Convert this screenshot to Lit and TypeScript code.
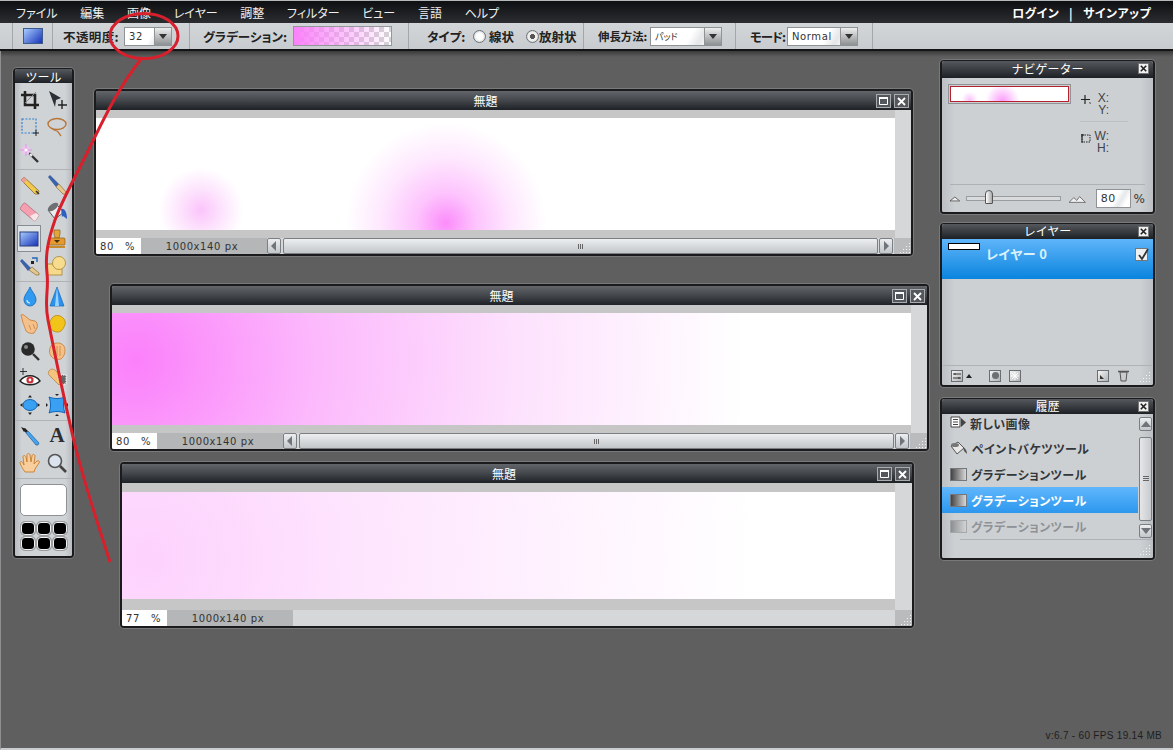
import { LitElement, html, css, svg } from "lit";
import { customElement } from "lit/decorators.js";

const MENU = ["ファイル", "編集", "画像", "レイヤー", "調整", "フィルター", "ビュー", "言語", "ヘルプ"];

const ico = (body: unknown) =>
  html`<svg class="ico" viewBox="0 0 22 22" width="22" height="22">${body}</svg>`;

// tool icons, row by row, two per row. null leaves the slot empty
const TOOLS_A = [
  [
    svg`<path d="M6 2v14h14M2 6h14v14" fill="none" stroke="#222" stroke-width="2.6"/><path d="M17 3l-11 11" stroke="#888" stroke-width="1"/>`,
    svg`<path d="M3 2l12 7-5 2-1 7z" fill="#2c3036"/><path d="M16 11v9M12 16h9" stroke="#222" stroke-width="1.4"/>`,
  ],
  [
    svg`<rect x="3" y="3" width="14" height="14" fill="none" stroke="#2f7fd0" stroke-width="1.2" stroke-dasharray="2 1.4"/><path d="M17 14v6M14 17h6" stroke="#222"/>`,
    svg`<ellipse cx="11" cy="8" rx="9" ry="5.5" fill="none" stroke="#b7763a" stroke-width="1.4"/><path d="M6 12c1 3 5 2 6 4l3 4" fill="none" stroke="#b7763a" stroke-width="1.3"/>`,
  ],
  [
    svg`<path d="M9 9l10 10" stroke="#333" stroke-width="2.4"/><path d="M11 11l2 2" stroke="#eee" stroke-width="2.2"/><circle cx="7" cy="7" r="4.5" fill="#ecc6ee"/><path d="M7 1v12M1 7h12" stroke="#d79be0" stroke-width="1"/><circle cx="7" cy="7" r="1.6" fill="#fff"/>`,
    null,
  ],
];

const TOOLS_B = [
  [
    svg`<path d="M5 3l15 14-1 3-3 0L2 6z" fill="#f0c94e" stroke="#8a6a2a" stroke-width=".8"/><path d="M2 6l3-3 3 3-3 3z" fill="#ee9d9d"/><path d="M17 17l3 3" stroke="#333" stroke-width="1.6"/>`,
    svg`<path d="M2 3l2-2 9 9-3 3z" fill="#3b62a8"/><path d="M10 13l3-3 7 8v2h-3z" fill="#e3c78c" stroke="#8b6f3b" stroke-width=".7"/>`,
  ],
  [
    svg`<path d="M6 2l14 12-3 5c-1 1-2 1-3 0L2 9c-1-1-1-2 0-3l2-3c1-1 1-1 2-1z" fill="#f59fb0" stroke="#a56a72" stroke-width=".7"/><path d="M11 15l3 4c1 1 2 1 3 0l3-5-3-2z" fill="#f7e6e8"/>`,
    svg`<path d="M2 9l8-6 8 8-9 7z" fill="#eceded" stroke="#555" stroke-width="1"/><ellipse cx="7" cy="6" rx="6" ry="3" fill="#6d6f72" transform="rotate(-35 7 6)"/><path d="M15 8c4-1 6 4 6 10l-4-3-1 1z" fill="#2f62c0"/>`,
  ],
];

const GRAD_TOOL = svg`<defs><linearGradient id="gt" x1="0" y1="0" x2="1" y2="1"><stop offset="0" stop-color="#a8ccff"/><stop offset="1" stop-color="#1733b8"/></linearGradient></defs><rect x="2" y="4" width="18" height="14" fill="url(#gt)" stroke="#2a3f78" stroke-width="1"/>`;

const STAMP = svg`<path d="M8 2h6v4l-1 4h-4l-1-4z" fill="#e2a53c" stroke="#8a5e1a" stroke-width=".7"/><rect x="3" y="10" width="16" height="7" rx="1" fill="#e39a2e" stroke="#8a5e1a" stroke-width=".7"/><path d="M8 12h6l-3 3z" fill="#4a2d0a"/><rect x="3" y="18" width="16" height="2" fill="#c98a2a"/>`;

const TOOLS_C = [
  [
    svg`<path d="M1 6l2-2 9 9-3 3z" fill="#3b62a8"/><path d="M10 15l3-3 7 6v2h-3z" fill="#e3c78c" stroke="#8b6f3b" stroke-width=".7"/><path d="M13 3h5v4" fill="none" stroke="#2466b8" stroke-width="1.4"/><rect x="12" y="6" width="3" height="3" fill="#222"/>`,
    svg`<rect x="1" y="9" width="15" height="11" fill="#f6d98a" stroke="#a78433" stroke-width=".8"/><circle cx="13" cy="8" r="6.5" fill="#f8dc8e" stroke="#a78433" stroke-width=".8"/>`,
  ],
];

const TOOLS_D = [
  [
    svg`<path d="M11 1c2 5 6 8 6 13a6 6 0 0 1-12 0c0-5 4-8 6-13z" fill="#2f9af0" stroke="#1466b8" stroke-width=".8"/><path d="M8 14a3 3 0 0 0 3 3" stroke="#cfe9ff" fill="none" stroke-width="1.2"/>`,
    svg`<path d="M11 1l7 19H4z" fill="#2a93ee" stroke="#1466b8" stroke-width=".7"/><path d="M11 1l-2 19h4z" fill="#9ad2ff"/>`,
  ],
  [
    svg`<path d="M2 2c1-1 3 0 4 1l5 4 5 1c2 1 3 4 2 7l-3 5c-3 1-6 0-8-2-1-3-2-6-3-8z" fill="#f6c08a" stroke="#c07c3a" stroke-width=".8"/><path d="M10 12l2 5M14 11l2 5" stroke="#c07c3a" stroke-width=".7"/>`,
    svg`<path d="M6 5c3-4 9-3 12 1 3 4 0 9-3 12-3 2-8 1-11-3-2-3 0-7 2-10z" fill="#f2c419" stroke="#b9860f" stroke-width=".8"/>`,
  ],
  [
    svg`<circle cx="9" cy="9" r="6.8" fill="#2a2a2a"/><circle cx="7" cy="7" r="2" fill="#8a8a8a"/><path d="M14 14l6 6" stroke="#333" stroke-width="2.4"/>`,
    svg`<path d="M5 6c3-4 10-4 13 0 2 4 1 10-3 13-4 1-8 0-10-3-2-3-2-7 0-10z" fill="#f5bf85" stroke="#c07c3a" stroke-width=".8"/><path d="M11 6v10M14 6v10M8 7v8" stroke="#c07c3a" stroke-width=".7"/>`,
  ],
  [
    svg`<path d="M1 14c5-7 15-7 20 0-5 5-15 5-20 0z" fill="#fff" stroke="#222" stroke-width="1.4"/><circle cx="11" cy="13" r="3.6" fill="#c8303a"/><circle cx="11" cy="13" r="1.4" fill="#fff"/><path d="M4 1v7M1 4.500h7" stroke="#222" stroke-width=".9"/>`,
    svg`<path d="M3 4c2-3 5-2 7 0l7 8-4 6-9-9c-2-2-2-3-1-5z" fill="#f6c37e" stroke="#b07a33" stroke-width=".7"/><path d="M12 8h8v9h-6z" fill="#666" stroke="#fff" stroke-dasharray="1.500 1"/>`,
  ],
  [
    svg`<ellipse cx="11" cy="11" rx="7" ry="5.500" fill="#39a0f2" stroke="#1466b8"/><path d="M11 1l2 2.500h-4zM11 21l2-2.500h-4zM1 11l2.500-2v4zM21 11l-2.500-2v4z" fill="#222"/>`,
    svg`<path d="M3 3c5 2 11 2 16 0-2 5-2 11 0 16-5-2-11-2-16 0 2-5 2-11 0-16z" fill="#39a0f2" stroke="#1466b8"/><path d="M0 9v4l2-2zM22 9v4l-2-2zM9 0h4l-2 2zM9 22h4l-2-2z" fill="#222"/>`,
  ],
];

const TOOLS_E: unknown[][] = [
  [
    svg`<path d="M2 2l5 2-2 3z" fill="#222"/><path d="M5 4l3 3" stroke="#222" stroke-width="2.6"/><path d="M7 8l2-2 11 12-1 2-2 0z" fill="#46a3ee" stroke="#1b5f9c" stroke-width=".7"/>`,
    "A",
  ],
  [
    svg`<path d="M6 20c-2-3-4-6-5-9 0-2 2-2 3 0l1 2-1-8c0-2 2-2 3 0l1 5V3c0-2 3-2 3 0l1 7 1-6c0-2 3-2 3 0l-1 8 3-3c2-1 3 1 2 2l-4 6-1 3z" fill="#f8cf9c" stroke="#c77d2e" stroke-width=".9"/>`,
    svg`<circle cx="9" cy="9" r="6.500" fill="#dbe4ee" stroke="#555" stroke-width="1.600"/><path d="M14 14l6 6" stroke="#444" stroke-width="2.600"/>`,
  ],
];

const renderTool = (t: unknown, active = false) => {
  if (t === null) return html`<span class="tool"></span>`;
  if (t === "A") return html`<span class="tool letter">A</span>`;
  return html`<span class="tool ${active ? "active" : ""}">${ico(t)}</span>`;
};

const renderGroup = (rows: unknown[][]) => rows.map((r) => r.map((t) => renderTool(t)));

const SWATCH_COUNT = 6;

const CLOSE_SMALL = html`<span class="pclose"><svg viewBox="0 0 10 10" width="9" height="9"><path d="M2 2l6 6M8 2l-6 6" stroke="#222" stroke-width="1.800"/></svg></span>`;

const GRIP = html`<svg class="grip" viewBox="0 0 12 12" width="12" height="12"><path d="M10 1h1v1h-1zM10 4h1v1h-1zM7 4h1v1H7zM10 7h1v1h-1zM7 7h1v1H7zM4 7h1v1H4zM10 10h1v1h-1zM7 10h1v1H7zM4 10h1v1H4zM1 10h1v1H1z" fill="#f2f2f2"/></svg>`;

const ARROW_L = html`<svg viewBox="0 0 6 10" width="6" height="10"><path d="M5 0v10L0 5z" fill="#6f757b"/></svg>`;
const ARROW_R = html`<svg viewBox="0 0 6 10" width="6" height="10"><path d="M1 0v10l5-5z" fill="#6f757b"/></svg>`;

@customElement("app-root")
export class AppRoot extends LitElement {
  static styles = css`
    :host {
      display: flex;
      flex-direction: column;
      position: relative;
      width: 1173px;
      height: 750px;
      overflow: hidden;
      background: #5f5f5f;
      font-family: "Noto Sans CJK JP", "Liberation Sans", sans-serif;
      color: #222;
    }
    .menubar {
      flex: none;
      height: 23px;
      box-sizing: border-box;
      border-top: 1px solid #b5b8bb;
      background: linear-gradient(#0e0f11, #2b2d31);
      display: flex;
      align-items: center;
      padding: 0 22px 0 16px;
      color: #f0f0f0;
      font-size: 12px;
      font-feature-settings: "palt";
    }
    .menubar .m {
      margin-right: 22.700px;
      white-space: nowrap;
    }
    .login {
      margin-left: auto;
      font-weight: 700;
      color: #fff;
      display: flex;
      gap: 10px;
      letter-spacing: 0.4px;
    }
    .optbar {
      flex: none;
      height: 26px;
      background: linear-gradient(#d2d6d8, #c8ccd0);
      display: flex;
      align-items: center;
      padding-left: 12px;
      font-size: 12.500px;
      font-weight: 700;
      font-feature-settings: "palt";
      border-bottom: 2px solid #141414;
    }
    .seg {
      height: 26px;
      box-sizing: border-box;
      border-left: 1px solid #a3a7aa;
      display: flex;
      align-items: center;
      white-space: nowrap;
    }
    .s-swatch {
      width: 40px;
      padding-left: 10px;
    }
    .s-opacity {
      width: 137px;
      padding-left: 10px;
    }
    .s-opacity .lab {
      width: 61px;
      letter-spacing: 0.4px;
    }
    .s-opacity .select {
      width: 48px;
    }
    .s-grad {
      width: 219px;
      padding-left: 13px;
    }
    .s-grad .lab {
      width: 90px;
    }
    .s-type {
      width: 175px;
      padding-left: 18px;
    }
    .s-type .lab {
      width: 46px;
    }
    .s-type .first {
      margin-right: 12px;
    }
    .s-stretch {
      width: 152px;
      padding-left: 14px;
    }
    .s-stretch .lab {
      width: 52px;
      font-size: 11.400px;
    }
    .s-stretch .select {
      width: 72px;
    }
    .s-mode {
      width: 137px;
      padding-left: 14px;
    }
    .s-mode .lab {
      width: 37px;
      letter-spacing: -1px;
    }
    .s-mode .select {
      width: 71px;
    }
    .s-mode .val {
      color: #666;
    }
    .s-end {
      width: 0;
    }
    .swatch-ico {
      width: 18px;
      height: 14px;
      background: linear-gradient(135deg, #a8ccff, #1733b8);
      border: 1px solid #3c5a8a;
    }
    .select {
      display: flex;
      height: 19px;
      box-sizing: border-box;
      border: 1px solid #8f9396;
      background: linear-gradient(120deg, #fff 55%, #e4e6e8 70%, #fff 85%);
      font-family: "DejaVu Sans", sans-serif;
      font-weight: 400;
      font-size: 10px;
      align-items: center;
      letter-spacing: 0.6px;
    }
    .select .val {
      flex: 1;
      padding-left: 4px;
      color: #333;
    }
    .select .val.ja {
      font-family: "Noto Sans CJK JP", sans-serif;
      font-size: 9px;
      letter-spacing: 0;
    }
    .select .btn {
      width: 16px;
      height: 17px;
      background: linear-gradient(#eceded, #8e9193);
      display: flex;
      align-items: center;
      justify-content: center;
      border-left: 1px solid #8f9396;
    }
    .select .btn::after {
      content: "";
      border: 4px solid transparent;
      border-top: 5px solid #333;
      border-bottom: 0;
    }
    .gradbox {
      width: 99px;
      height: 20px;
      box-sizing: border-box;
      border: 1px solid #93979a;
      background: linear-gradient(90deg, #fa82fa, rgba(250, 130, 250, 0)),
        repeating-conic-gradient(#d4d4d4 0 25%, #fff 0 50%) 0 0 / 10px 10px;
    }
    .radio {
      width: 11px;
      height: 11px;
      border-radius: 50%;
      border: 1px solid #70757a;
      background: radial-gradient(circle, #fff 40%, #b9bdc0);
      margin-right: 3px;
    }
    .radio.on {
      background: radial-gradient(circle, #555 0 30%, #eee 35% 55%, #a9adb0);
      margin-right: 0;
    }
    .desk {
      flex: 1;
      background: linear-gradient(#3a3a3a, #5f5f5f 6px);
      border-left: 1px solid #8d8f91;
      border-bottom: 2px solid #c9cdd0;
    }

    /* windows sit on a free desktop, so these are placed by coordinates */
    .win,
    .panel {
      position: absolute;
      box-sizing: border-box;
      border: 2px solid #1b1b1d;
      border-radius: 4px;
      box-shadow: 0 0 0 1px #77797b;
      display: flex;
      flex-direction: column;
      background: #cdd0d3;
      overflow: hidden;
    }
    .panel {
      border-top-width: 1px;
    }
    .w1 {
      left: 94px;
      top: 89px;
      width: 819px;
      height: 167px;
    }
    .w2 {
      left: 110px;
      top: 284px;
      width: 819px;
      height: 167px;
    }
    .w3 {
      left: 120px;
      top: 462px;
      width: 794px;
      height: 166px;
    }
    .title {
      flex: none;
      height: 19px;
      background: linear-gradient(#62666b, #43474c 50%, #1e2126);
      color: #fff;
      font-size: 12px;
      display: flex;
      align-items: center;
      justify-content: center;
      padding-right: 36px;
      position: relative;
    }
    .w3 .title {
      padding-right: 26px;
    }
    .tbtns {
      position: absolute;
      right: 2px;
      top: 3px;
      display: flex;
      gap: 3px;
    }
    .tbtn {
      width: 13px;
      height: 12px;
      border: 1px solid #a9acaf;
      background: #54585d;
      display: flex;
      align-items: center;
      justify-content: center;
    }
    .main {
      flex: 1;
      display: flex;
      min-height: 0;
    }
    .stage {
      flex: 1;
      min-width: 0;
      display: flex;
      flex-direction: column;
      background: #c6c6c6;
      padding: 8px 0;
    }
    .w3 .stage {
      padding: 9px 0 11px;
    }
    .w3 .vcol {
      width: 17px;
    }
    .w3 .art {
      background: radial-gradient(circle 640px at 3.200% 62%, #fdd2fd, #fee6fe 35%, #fff 95%);
    }
    .w2 .art {
      background: radial-gradient(circle 640px at 3% 42%, #fb80fb, #fcb9fc 28%, #fde2fd 60%, #fff 95%);
    }
    .w1 .art {
      background: radial-gradient(circle 42px at 105px 92px, #fbc4fb, #fde4fd 50%, rgba(255, 255, 255, 0)),
        radial-gradient(circle 100px at 350px 105px, #fb8cfb, #fdc4fd 30%, #fee8fe 65%, rgba(255, 255, 255, 0)), #fff;
    }
    .art {
      flex: 1;
    }
    .vcol {
      flex: none;
      width: 16px;
      background: #d6d7d9;
    }
    .status {
      flex: none;
      height: 16px;
      display: flex;
      background: #d6d7d9;
      font-family: "DejaVu Sans", sans-serif;
      font-size: 10px;
      letter-spacing: 0.6px;
      align-items: stretch;
      color: #333;
    }
    .zoomf {
      width: 45px;
      box-sizing: border-box;
      background: #fff;
      display: flex;
      justify-content: space-between;
      align-items: center;
      padding: 0 6px 0 4px;
    }
    .info {
      width: 126px;
      box-sizing: border-box;
      padding-right: 4px;
      background: #b4b6b7;
      display: flex;
      justify-content: center;
      align-items: center;
    }
    .sbtn {
      width: 14px;
      box-sizing: border-box;
      border: 1px solid #7a7f84;
      border-radius: 2px;
      background: linear-gradient(#eceef0, #c3c7ca);
      display: flex;
      align-items: center;
      justify-content: center;
    }
    .strack {
      flex: 1;
      margin: 0 1px 0 2px;
      box-sizing: border-box;
      border: 1px solid #7a7f84;
      border-radius: 2px;
      background: linear-gradient(#eceef0, #c3c7ca);
      display: flex;
      align-items: center;
      justify-content: center;
    }
    .strack span {
      width: 6px;
      height: 5px;
      background: repeating-linear-gradient(90deg, #666 0 1px, transparent 1px 2px);
    }
    .gripbox {
      flex: none;
      width: 17px;
      margin-left: 1px;
      background: #b9bbbd;
      display: flex;
      align-items: flex-end;
      justify-content: flex-end;
    }
    .status .fill {
      flex: 1;
    }

    /* tools palette */
    .tools {
      left: 13px;
      top: 68px;
      width: 61px;
      height: 490px;
    }
    .phead {
      flex: none;
      height: 15px;
      padding-bottom: 2px;
      box-sizing: content-box;
      background: linear-gradient(#55595e, #1d2025);
      color: #fff;
      font-size: 12px;
      display: flex;
      align-items: center;
      justify-content: center;
      position: relative;
    }
    .tools .phead {
      height: 14px;
      padding-bottom: 0;
    }
    .nav .phead {
      height: 14px;
      padding-bottom: 3px;
    }
    .layers .phead,
    .hist .phead {
      height: 13px;
      padding-bottom: 2px;
    }
    .tbody {
      flex: 1;
      background: linear-gradient(90deg, #b8bbbf, #d0d3d6 12%, #d0d3d6 88%, #b8bbbf);
      padding-top: 3px;
      display: flex;
      flex-direction: column;
    }
    .tgrid {
      display: grid;
      grid-template-columns: 27px 27px;
      grid-auto-rows: 27px;
      justify-content: center;
      padding-bottom: 2px;
      border-bottom: 1px solid #b0b3b6;
      margin-bottom: 1px;
    }
    .tool {
      display: flex;
      align-items: center;
      justify-content: center;
      box-sizing: border-box;
      height: 27px;
    }
    .tool.active {
      border: 1px solid #888d93;
      background: #dfe3e6;
      margin-right: 3px;
    }
    .tool.letter {
      font-family: "Liberation Serif", serif;
      font-weight: 700;
      font-size: 21px;
      color: #2b2e33;
    }
    .ico {
      display: block;
    }
    .fg {
      margin: 4px 5px 6px;
      height: 32px;
      background: #fff;
      border: 1px solid #8e9295;
      border-radius: 5px;
      box-sizing: border-box;
    }
    .blacks {
      display: grid;
      grid-template-columns: repeat(3, 14px);
      grid-auto-rows: 13px;
      gap: 2px;
      justify-content: center;
    }
    .blacks i {
      background: #000;
      border: 1px solid #f2f2f2;
      border-radius: 4px;
      box-shadow: 0 0 0 1px #9a9da0;
    }

    /* right side panels */
    .nav {
      left: 940px;
      top: 60px;
      width: 215px;
      height: 154px;
    }
    .layers {
      left: 940px;
      top: 223px;
      width: 215px;
      height: 164px;
    }
    .hist {
      left: 940px;
      top: 398px;
      width: 215px;
      height: 162px;
    }
    .pclose {
      position: absolute;
      right: 4px;
      top: 2px;
      width: 9px;
      height: 9px;
      background: #f0f0f0;
      border: 1px solid #777;
      display: flex;
    }
    .pbody {
      flex: 1;
      display: flex;
      flex-direction: column;
      min-height: 0;
      background: linear-gradient(90deg, #bcbfc3, #cdd0d3 6%, #cdd0d3 94%, #bcbfc3);
    }
    .navtop {
      flex: 1;
      display: flex;
      padding: 6px 0 0 6px;
    }
    .thumb {
      width: 123px;
      height: 20px;
      box-sizing: border-box;
      border: 1px solid #8f9396;
      padding: 1px;
    }
    .thumb div {
      height: 100%;
      box-sizing: border-box;
      border: 1px solid #b3222e;
      background: radial-gradient(circle 8px at 16% 90%, #fbc4fb, rgba(255, 255, 255, 0)),
        radial-gradient(circle 17px at 44% 100%, #fb9cfb, rgba(255, 255, 255, 0)), #fff;
    }
    .coords {
      margin: 6px 0 0 9px;
      width: 48px;
      color: #3e4347;
      font-family: "Liberation Sans", sans-serif;
      font-size: 12px;
      line-height: 12px;
    }
    .coord {
      display: flex;
      align-items: center;
      height: 28px;
    }
    .coord svg {
      flex: none;
      margin-top: -8px;
    }
    .coord + .coord {
      border-top: 1px solid #bcc0c3;
      margin-top: 3px;
      padding-top: 6px;
    }
    .coord b {
      font-weight: 400;
      text-align: right;
      width: 17px;
    }
    .navbot {
      flex: none;
      height: 27px;
      margin: 0 8px;
      border-top: 1px solid #aeb2b5;
      display: flex;
      align-items: center;
      font-size: 12px;
      font-family: "DejaVu Sans", sans-serif;
      color: #333;
    }
    .track {
      width: 97px;
      height: 3px;
      margin: 0 8px 0 5px;
      border: 1px solid #9a9da0;
      background: #d8dadc;
      position: relative;
    }
    .thumbknob {
      position: absolute;
      left: 18px;
      top: -7px;
      width: 8px;
      height: 14px;
      background: linear-gradient(90deg, #fff, #aaa);
      border: 1px solid #555;
      border-radius: 4px 4px 1px 1px;
      box-sizing: border-box;
    }
    .zinput {
      width: 36px;
      height: 19px;
      box-sizing: border-box;
      border: 1px solid #8f9396;
      background: linear-gradient(120deg, #fff 55%, #e6e8ea 70%, #fff 85%);
      font-size: 11px;
      letter-spacing: 0.6px;
      display: flex;
      align-items: center;
      padding-left: 4px;
      margin: 0 3px 0 9px;
    }
    .layer-row {
      flex: none;
      height: 40px;
      box-sizing: border-box;
      background: linear-gradient(#5fb5fa, #0a84de);
      display: flex;
      padding: 4px 5px 0 6px;
      color: #d9f1ff;
      font-size: 13px;
      font-weight: 700;
      font-feature-settings: "palt";
    }
    .lthumb {
      width: 32px;
      height: 7px;
      box-sizing: border-box;
      border: 1px solid #000;
      background: #fff;
    }
    .lname {
      margin: 1px 0 0 6px;
      letter-spacing: 0.4px;
      flex: 1;
    }
    .lcheck {
      margin-top: 5px;
      width: 11px;
      height: 11px;
      background: #eef0f1;
      border: 1px solid #777;
      position: relative;
    }
    .lcheck svg {
      display: block;
    }
    .spacer {
      flex: 1;
    }
    .pfoot {
      flex: none;
      height: 19px;
      margin: 0 1px;
      border-top: 1px solid #aeb2b5;
      display: flex;
      align-items: center;
      padding-left: 8px;
      position: relative;
    }
    .pfoot .grip {
      position: absolute;
      right: 1px;
      bottom: 2px;
    }
    .pfoot .caret {
      margin: 0 17px 0 3px;
    }
    .pfoot .trash {
      margin: 0 22px 0 8px;
    }
    .pfoot .gap {
      margin-left: 8px;
    }
    .pi {
      width: 10px;
      height: 10px;
      border: 1px solid #6a6e72;
      background: linear-gradient(135deg, #f6f6f6, #b0b3b6);
      display: flex;
      align-items: center;
      justify-content: center;
    }
    .pi.rec::after {
      content: "";
      width: 7px;
      height: 7px;
      border-radius: 50%;
      background: #6c7074;
    }
    .pi svg {
      display: block;
    }
    .histmain {
      flex: 1;
      display: flex;
      min-height: 0;
    }
    .hlist {
      flex: 1;
      overflow: hidden;
      font-size: 12px;
      font-weight: 700;
      letter-spacing: 0.4px;
      font-feature-settings: "palt";
      color: #33373b;
    }
    .hrow {
      height: 26px;
      display: flex;
      align-items: center;
      gap: 4px;
      padding-left: 8px;
      box-sizing: border-box;
    }
    .hrow svg {
      flex: none;
    }
    .hrow.first {
      height: 21px;
      padding-bottom: 3px;
    }
    .hrow.sel {
      background: linear-gradient(#60b7fc, #2c97ee);
      color: #fff;
    }
    .hrow.off {
      color: #8e9296;
    }
    .hrow.off .gi {
      opacity: 0.45;
    }
    .gi {
      width: 15px;
      height: 11px;
      border: 1px solid #74787c;
      background: linear-gradient(90deg, #444, #d8d8d8);
      flex: none;
    }
    .hscroll {
      flex: none;
      width: 15px;
      padding: 3px 1px 1px;
      box-sizing: border-box;
      display: flex;
      flex-direction: column;
    }
    .hscroll .u {
      flex: none;
      height: 14px;
      box-sizing: border-box;
      border: 1px solid #7a7f84;
      border-radius: 2px;
      background: linear-gradient(#eceef0, #c3c7ca);
      display: flex;
      align-items: center;
      justify-content: center;
    }
    .hscroll .t {
      flex: 1;
      border: 1px solid #7a7f84;
      border-radius: 2px;
      background: linear-gradient(90deg, #e4e6e8, #c8cbce);
      display: flex;
      align-items: center;
      justify-content: center;
      margin: 6px 0 3px;
    }
    .hscroll .t span {
      width: 6px;
      height: 6px;
      background: repeating-linear-gradient(#666 0 1px, transparent 1px 2px);
    }
    .hfoot {
      flex: none;
      height: 18px;
      border-top: 1px solid #aeb2b5;
      margin-left: 18px;
      position: relative;
    }
    .hfoot .grip {
      position: absolute;
      right: 2px;
      bottom: 2px;
    }
    .ver {
      position: absolute;
      right: 11px;
      bottom: 9px;
      font-family: "Liberation Sans", sans-serif;
      font-size: 10px;
      letter-spacing: 0.3px;
      color: #1e1e1e;
    }
    .mark {
      position: absolute;
      left: 0;
      top: 0;
      pointer-events: none;
    }
  `;

  private docWin(cls: string, zoom: string, scroll: boolean) {
    return html`
      <section class="win ${cls}">
        <div class="title">
          無題
          <div class="tbtns">
            <span class="tbtn"><svg viewBox="0 0 9 8" width="9" height="8"><path d="M.5 1.500h8v6h-8z" fill="none" stroke="#fff"/><path d="M0 1h9" stroke="#fff" stroke-width="2"/></svg></span>
            <span class="tbtn"><svg viewBox="0 0 9 9" width="9" height="9"><path d="M1 1l7 7M8 1L1 8" stroke="#fff" stroke-width="1.800"/></svg></span>
          </div>
        </div>
        <div class="main">
          <div class="stage"><div class="art"></div></div>
          <div class="vcol"></div>
        </div>
        <div class="status">
          <div class="zoomf"><span>${zoom}</span><span>%</span></div>
          <div class="info">1000x140 px</div>
          ${scroll
            ? html`<div class="sbtn">${ARROW_L}</div>
                <div class="strack"><span></span></div>
                <div class="sbtn">${ARROW_R}</div>`
            : html`<div class="fill"></div>`}
          <div class="gripbox">${GRIP}</div>
        </div>
      </section>
    `;
  }

  render() {
    return html`
      <div class="menubar">
        ${MENU.map((m) => html`<span class="m">${m}</span>`)}
        <div class="login"><span>ログイン</span><span>|</span><span>サインアップ</span></div>
      </div>
      <div class="optbar">
        <div class="seg s-swatch"><div class="swatch-ico"></div></div>
        <div class="seg s-opacity">
          <span class="lab">不透明度:</span>
          <div class="select"><span class="val">32</span><span class="btn"></span></div>
        </div>
        <div class="seg s-grad">
          <span class="lab">グラデーション:</span>
          <div class="gradbox"></div>
        </div>
        <div class="seg s-type">
          <span class="lab">タイプ:</span>
          <span class="radio"></span><span class="first">線状</span>
          <span class="radio on"></span><span>放射状</span>
        </div>
        <div class="seg s-stretch">
          <span class="lab">伸長方法:</span>
          <div class="select"><span class="val ja">パッド</span><span class="btn"></span></div>
        </div>
        <div class="seg s-mode">
          <span class="lab">モード:</span>
          <div class="select"><span class="val">Normal</span><span class="btn"></span></div>
        </div>
        <div class="seg s-end"></div>
      </div>
      <div class="desk"></div>

      ${this.docWin("w1", "80", true)}
      ${this.docWin("w2", "80", true)}
      ${this.docWin("w3", "77", false)}

      <section class="panel tools">
        <div class="phead">ツール</div>
        <div class="tbody">
          <div class="tgrid">${renderGroup(TOOLS_A)}</div>
          <div class="tgrid">
            ${renderGroup(TOOLS_B)} ${renderTool(GRAD_TOOL, true)} ${renderTool(STAMP)} ${renderGroup(TOOLS_C)}
          </div>
          <div class="tgrid">${renderGroup(TOOLS_D)}</div>
          <div class="tgrid">${renderGroup(TOOLS_E)}</div>
          <div class="fg"></div>
          <div class="blacks">${Array.from({ length: SWATCH_COUNT }, () => html`<i></i>`)}</div>
        </div>
      </section>

      <section class="panel nav">
        <div class="phead">ナビゲーター${CLOSE_SMALL}</div>
        <div class="pbody">
          <div class="navtop">
            <div class="thumb"><div></div></div>
            <div class="coords">
              <div class="coord">
                <svg viewBox="0 0 12 12" width="12" height="12"><path d="M5 1v9M1 5.500h9" stroke="#222" stroke-width="1.200"/><path d="M9 8l2 1-1 1z" fill="#222"/></svg>
                <b>X:<br />Y:</b>
              </div>
              <div class="coord">
                <svg viewBox="0 0 12 12" width="12" height="12"><path d="M2 3h8v7H2z" fill="none" stroke="#222" stroke-dasharray="1.500 1"/><path d="M2 2v9M1 3h3" stroke="#222"/></svg>
                <b>W:<br />H:</b>
              </div>
            </div>
          </div>
          <div class="navbot">
            <svg viewBox="0 0 11 6" width="11" height="6"><path d="M0 5l5-4 5 4z" fill="#f0f0f0" stroke="#444" stroke-width=".8"/></svg>
            <div class="track"><span class="thumbknob"></span></div>
            <svg viewBox="0 0 18 8" width="18" height="8"><path d="M0 7.500l5-5 3 3 3-4 6 6z" fill="#f0f0f0" stroke="#555" stroke-width=".8"/></svg>
            <div class="zinput">80</div>
            <span>%</span>
          </div>
        </div>
      </section>

      <section class="panel layers">
        <div class="phead">レイヤー${CLOSE_SMALL}</div>
        <div class="pbody">
          <div class="layer-row">
            <div class="lthumb"></div>
            <div class="lname">レイヤー 0</div>
            <div class="lcheck">
              <svg viewBox="0 0 14 14" width="14" height="14"><path d="M3 6l3 4 6-10" fill="none" stroke="#333" stroke-width="1.800"/></svg>
            </div>
          </div>
          <div class="spacer"></div>
          <div class="pfoot">
            <span class="pi"><svg viewBox="0 0 8 8" width="8" height="8"><path d="M0 2h8M0 6h8" stroke="#333"/><path d="M2 1v2M6 5v2" stroke="#333"/></svg></span>
            <svg class="caret" viewBox="0 0 6 4" width="6" height="4"><path d="M0 4l3-4 3 4z" fill="#222"/></svg>
            <span class="pi rec"></span>
            <span class="pi gap"><svg viewBox="0 0 8 8" width="8" height="8"><path d="M4 0v8M0 4h8M1 1l6 6M7 1L1 7" stroke="#fff"/></svg></span>
            <span class="spacer"></span>
            <span class="pi"><svg viewBox="0 0 8 8" width="8" height="8"><path d="M1 3l4 4H1z" fill="#333"/></svg></span>
            <svg class="trash" viewBox="0 0 13 13" width="13" height="13"><path d="M3 3h7l-1 9H4z" fill="#c9cccf" stroke="#555"/><path d="M1 2.500h11" stroke="#555" stroke-width="1.400"/></svg>
            ${GRIP}
          </div>
        </div>
      </section>

      <section class="panel hist">
        <div class="phead">履歴${CLOSE_SMALL}</div>
        <div class="pbody">
          <div class="histmain">
            <div class="hlist">
              <div class="hrow first">
                <svg viewBox="0 0 16 14" width="16" height="14"><path d="M1 1h9v10H1z" fill="#fff" stroke="#444"/><path d="M3 3.500h5M3 6h5M3 8.500h5" stroke="#444"/><path d="M11 2l5 4.500-5 4.500z" fill="#444"/></svg>
                新しい画像
              </div>
              <div class="hrow">
                <svg viewBox="0 0 18 16" width="18" height="16"><path d="M1 6l7-4 6 6-7 6z" fill="#e8e8e8" stroke="#555"/><ellipse cx="5" cy="5" rx="4" ry="2" fill="#777"/><path d="M13 7c2 1 4 3 4 7l-3-3z" fill="#555"/></svg>
                ペイントバケツツール
              </div>
              <div class="hrow"><span class="gi"></span>グラデーションツール</div>
              <div class="hrow sel"><span class="gi"></span>グラデーションツール</div>
              <div class="hrow off"><span class="gi"></span>グラデーションツール</div>
            </div>
            <div class="hscroll">
              <div class="u"><svg viewBox="0 0 10 6" width="10" height="6"><path d="M0 6l5-6 5 6z" fill="#6f757b"/></svg></div>
              <div class="t"><span></span></div>
              <div class="u"><svg viewBox="0 0 10 6" width="10" height="6"><path d="M0 0l5 6 5-6z" fill="#6f757b"/></svg></div>
            </div>
          </div>
          <div class="hfoot">${GRIP}</div>
        </div>
      </section>

      <div class="ver">v:6.7 - 60 FPS 19.14 MB</div>

      <svg class="mark" width="1173" height="750" viewBox="0 0 1173 750" fill="none" stroke="#d8202c" stroke-width="3">
        <ellipse cx="144" cy="36" rx="34" ry="22.500" />
        <path d="M142 58C120 85 104 118 90 147S62 200 55 220S45 255 47 273S44 300 48 320S62 390 73 437S100 530 110 562" />
      </svg>
    `;
  }
}
